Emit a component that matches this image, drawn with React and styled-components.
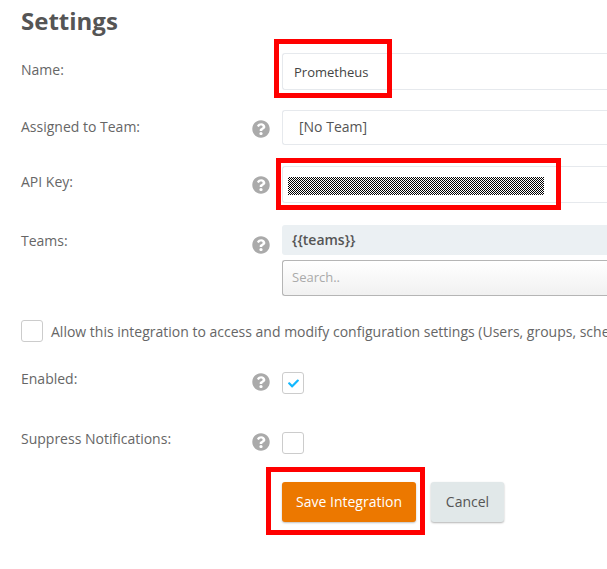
import React from "react";
import styled, { createGlobalStyle } from "styled-components";
import { FaQuestionCircle, FaCheck } from "react-icons/fa";

const GlobalStyle = createGlobalStyle`
  html, body {
    margin: 0;
    padding: 0;
    background: #fff;
    overflow: hidden;
  }
  body {
    font-family: "Open Sans", "Liberation Sans", sans-serif;
    color: #555;
  }
`;

const App = () => {
  return (
    <Page>
      <GlobalStyle />
      <Title>Settings</Title>

      <Row $top={17}>
        <Label $top={7}>Name:</Label>
        <span />
        <FieldWrap>
          <TextField>Prometheus</TextField>
          <Highlight $left={-8} $top={-14} $width={118} $height={59} />
        </FieldWrap>
      </Row>

      <Row $top={20}>
        <Label $top={7}>Assigned to Team:</Label>
        <Help $top={10} />
        <SelectField>[No Team]</SelectField>
      </Row>

      <Row $top={21}>
        <Label $top={6}>API Key:</Label>
        <Help $top={10} />
        <FieldWrap>
          <TextField>
            <Redacted />
          </TextField>
          <Highlight $left={-6} $top={-8} $width={285} $height={52} />
        </FieldWrap>
      </Row>

      <Row $top={22}>
        <Label $top={6}>Teams:</Label>
        <Help $top={11} />
        <TeamsBox>
          <TeamChip>{"{{teams}}"}</TeamChip>
          <SearchBox>Search..</SearchBox>
        </TeamsBox>
      </Row>

      <AllowRow>
        <CheckBox />
        <AllowText>
          Allow this integration to access and modify configuration settings (Users, groups, schedules, etc.)
        </AllowText>
      </AllowRow>

      <Row $top={30}>
        <Label $top={-3}>Enabled:</Label>
        <Help $top={1} />
        <CheckBox>
          <FaCheck size={11} color="#12b8ff" />
        </CheckBox>
      </Row>

      <Row $top={38}>
        <Label $top={-3}>Suppress Notifications:</Label>
        <Help $top={1} />
        <CheckBox />
      </Row>

      <Buttons>
        <FieldWrap>
          <SaveButton>Save Integration</SaveButton>
          <Highlight $left={-16} $top={-15} $width={159} $height={68} />
        </FieldWrap>
        <CancelButton>Cancel</CancelButton>
      </Buttons>
    </Page>
  );
};

const Help = ({ $top }) => (
  <HelpIcon $top={$top}>
    <FaQuestionCircle size={18} color="#aaa" />
  </HelpIcon>
);

export default App;

// Styled Components
const Page = styled.div`
  width: 800px;
  height: 569px;
  padding: 6px 0 0 21px;
  box-sizing: border-box;
`;

const Title = styled.h2`
  margin: 0;
  font-size: 24px;
  line-height: 30px;
  font-weight: 700;
  color: #555;
`;

const Row = styled.div`
  display: grid;
  grid-template-columns: 231px 30px 1fr;
  align-items: start;
  margin-top: ${(props) => props.$top}px;
`;

const Label = styled.div`
  font-size: 14px;
  line-height: 19px;
  color: #666;
  margin-top: ${(props) => props.$top}px;
`;

const HelpIcon = styled.div`
  display: flex;
  height: 18px;
  margin-top: ${(props) => props.$top}px;
`;

const FieldWrap = styled.div`
  position: relative;
`;

const TextField = styled.div`
  display: flex;
  align-items: center;
  box-sizing: border-box;
  height: 37px;
  padding: 0 0 0 11px;
  border: 1px solid #e6e9ed;
  border-right: none;
  border-radius: 3px 0 0 3px;
  font-size: 13px;
  color: #444;
`;

const SelectField = styled(TextField)`
  height: 35px;
  padding: 0 0 2px 16px;
  font-size: 14px;
  color: #555;
`;

const Redacted = styled.div`
  width: 256px;
  height: 18px;
  margin: 2px 0 0 -6px;
  background: repeating-conic-gradient(#000 0 25%, #fff 0 50%) 0 0 / 2px 2px;
`;

const TeamsBox = styled.div`
  display: flex;
  flex-direction: column;
  gap: 5px;
`;

const TeamChip = styled.div`
  height: 30px;
  padding: 0 0 0 10px;
  background: #ebf0f3;
  border-radius: 3px 0 0 3px;
  font-size: 14px;
  font-weight: 600;
  line-height: 29px;
  color: #555;
`;

const SearchBox = styled.div`
  box-sizing: border-box;
  height: 36px;
  padding-left: 9px;
  border: 1px solid #b5b5b5;
  border-right: none;
  border-radius: 3px 0 0 3px;
  background: linear-gradient(to bottom, #fff, #f1f1f1);
  font-size: 13px;
  line-height: 32px;
  color: #aaa;
`;

const AllowRow = styled.div`
  display: flex;
  align-items: center;
  gap: 8px;
  margin-top: 24px;
  white-space: nowrap;
`;

const AllowText = styled.span`
  font-size: 14px;
  color: #666;
`;

const CheckBox = styled.div`
  display: flex;
  align-items: center;
  justify-content: center;
  box-sizing: border-box;
  width: 22px;
  height: 22px;
  border: 1px solid #ccc;
  border-radius: 3px;
  background: #fff;
`;

const Buttons = styled.div`
  display: flex;
  gap: 15px;
  margin: 28px 0 0 261px;
`;

const SaveButton = styled.button`
  width: 134px;
  height: 40px;
  padding: 0 0 2px;
  border: none;
  border-radius: 3px;
  background: #ec7800;
  box-shadow: 0 1px 2px rgba(0, 0, 0, 0.25);
  font-family: inherit;
  font-size: 14px;
  color: #fff;
`;

const CancelButton = styled.button`
  width: 73px;
  height: 40px;
  padding: 0 0 2px;
  border: none;
  border-radius: 3px;
  background: #e1e8e9;
  box-shadow: 0 1px 2px rgba(0, 0, 0, 0.3);
  font-family: inherit;
  font-size: 14px;
  color: #555;
`;

const Highlight = styled.div`
  position: absolute;
  box-sizing: border-box;
  left: ${(props) => props.$left}px;
  top: ${(props) => props.$top}px;
  width: ${(props) => props.$width}px;
  height: ${(props) => props.$height}px;
  border: 5px solid #f00;
  pointer-events: none;
`;
